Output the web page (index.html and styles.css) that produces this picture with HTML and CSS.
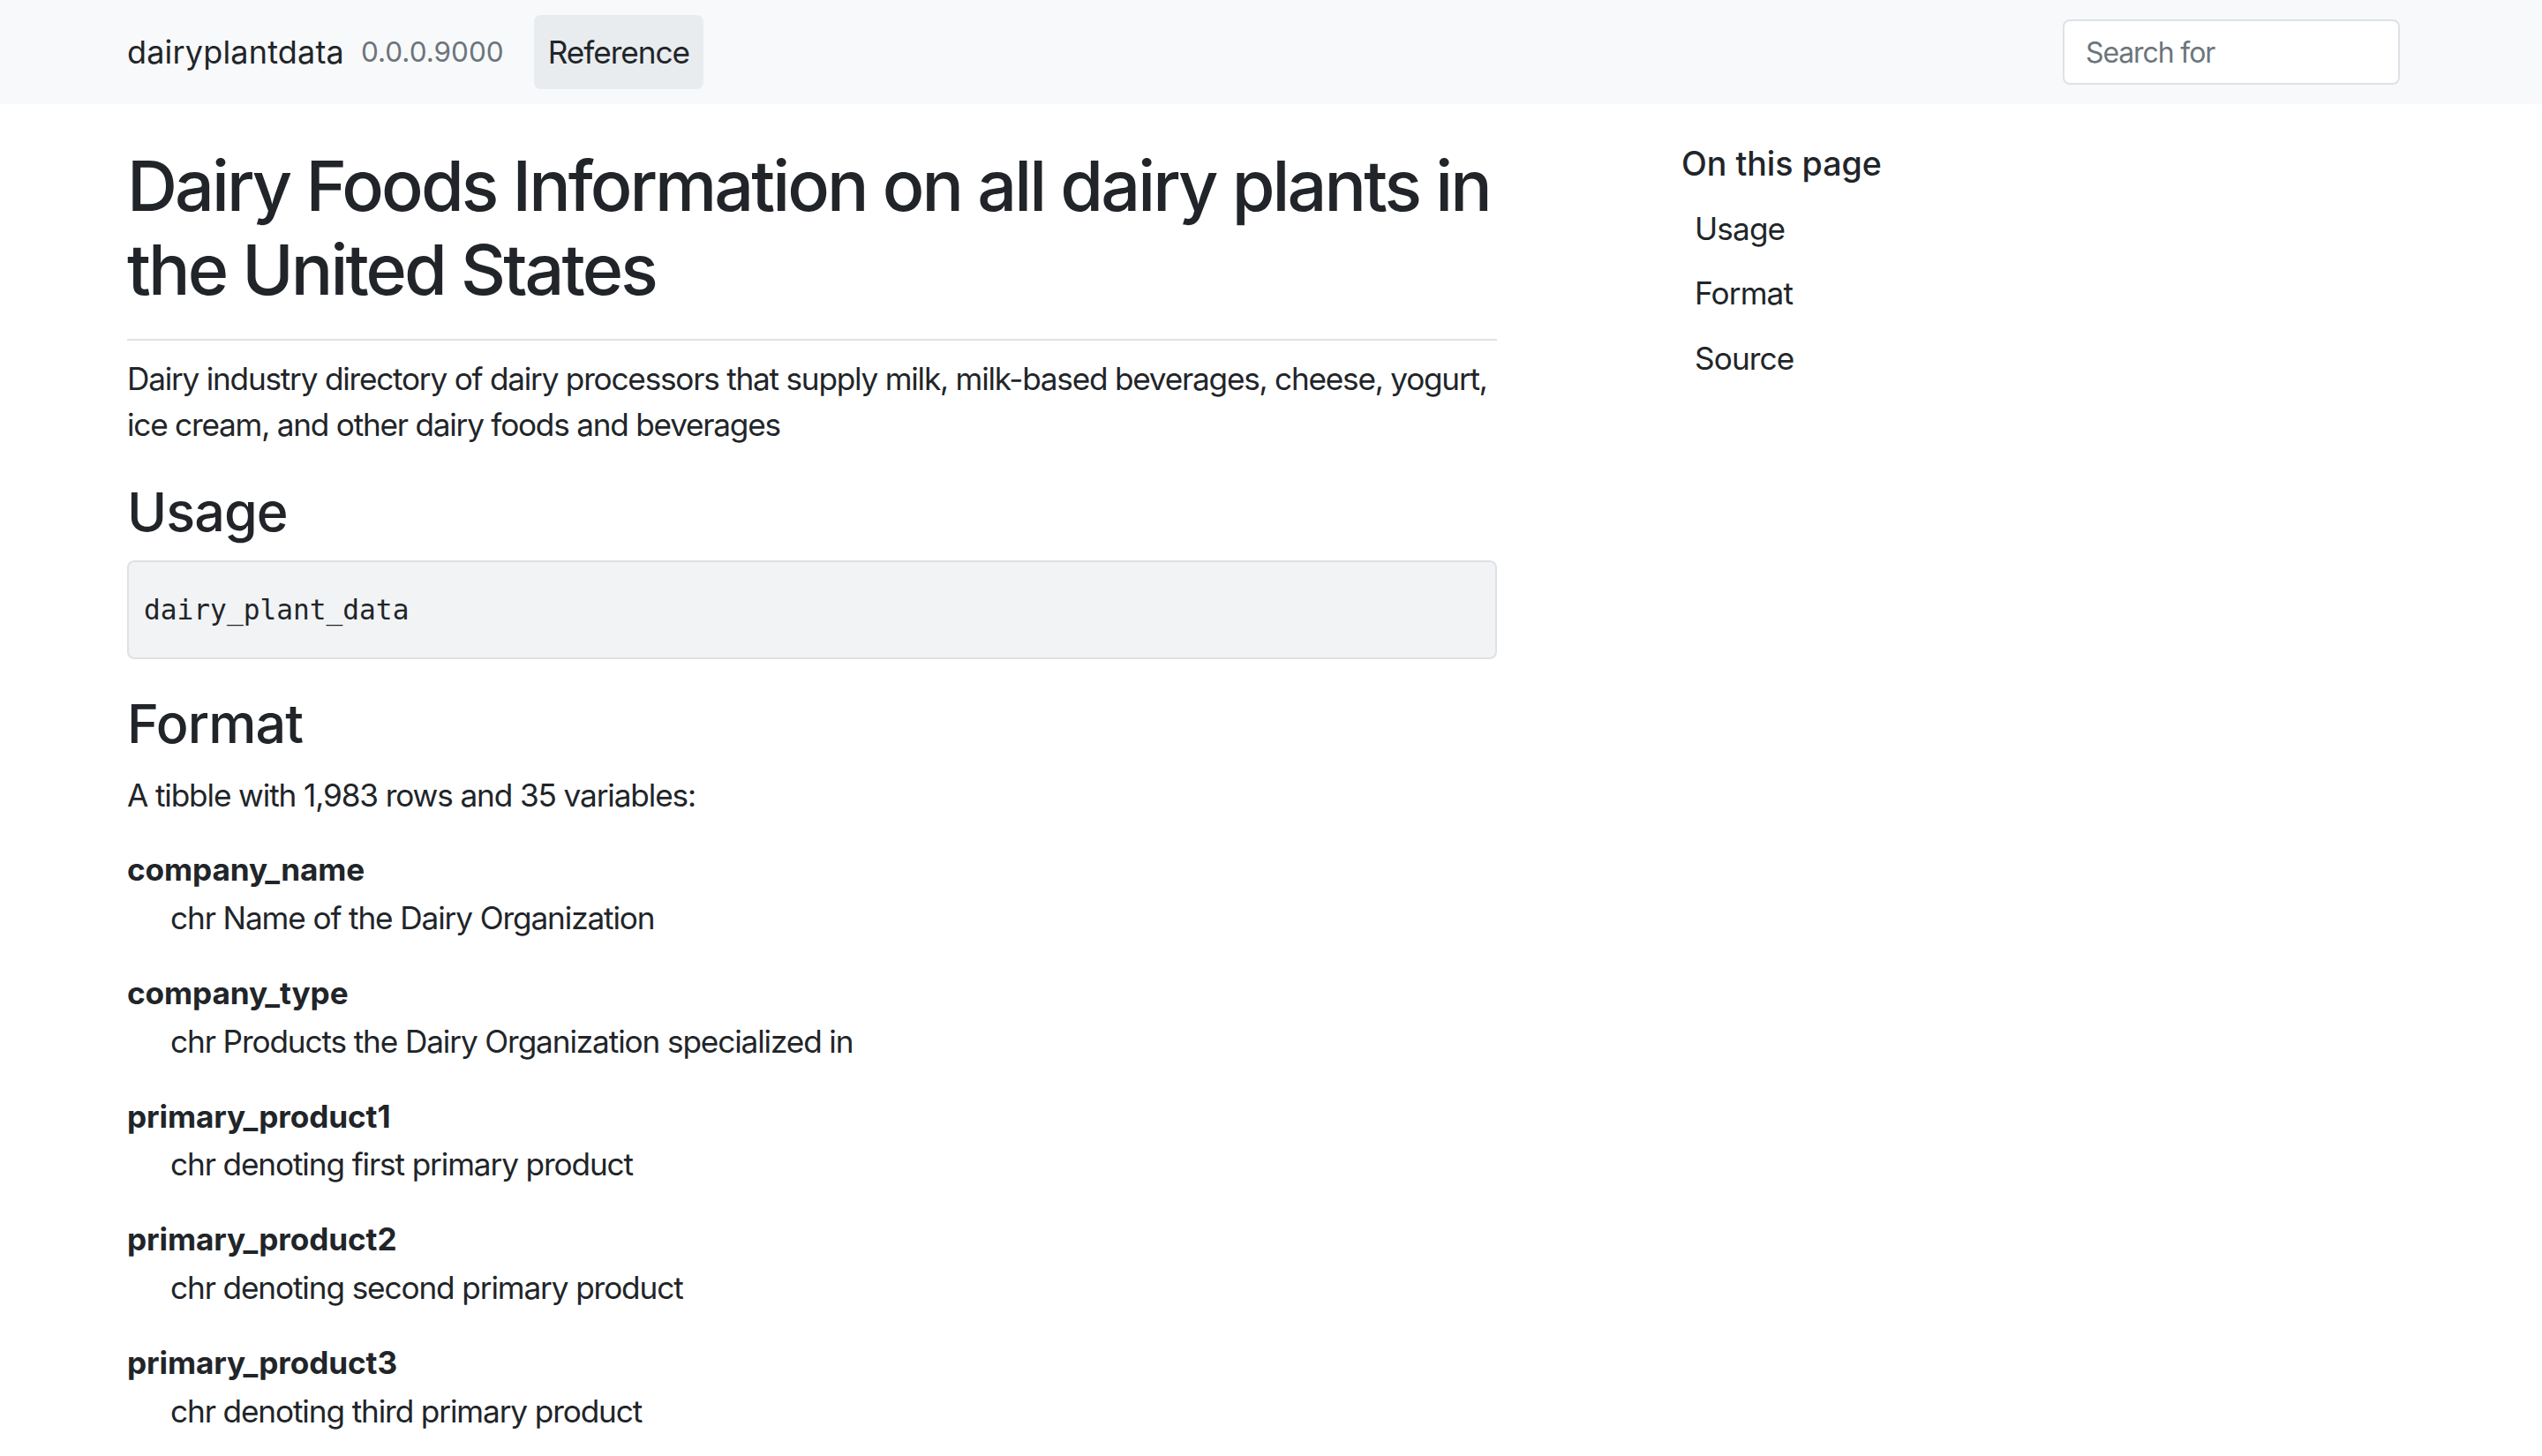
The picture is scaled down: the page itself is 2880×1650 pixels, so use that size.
FILE: index.html
```html
<!DOCTYPE html>
<html lang="en">
<head>
<meta charset="utf-8">
<title>Dairy Foods Information on all dairy plants in the United States — dairy_plant_data</title>
<link rel="stylesheet" href="styles.css">
</head>
<body>
<header class="navbar">
  <div class="nav-inner">
    <a class="brand" href="#">dairyplantdata</a>
    <span class="version">0.0.0.9000</span>
    <a class="nav-ref" href="#">Reference</a>
    <div class="spacer"></div>
    <input class="search" type="search" placeholder="Search for">
  </div>
</header>
<div class="page">
  <main class="main">
    <h1 class="title">Dairy Foods Information on all dairy plants in the United States</h1>
    <p class="desc">Dairy industry directory of dairy processors that supply milk, milk-based beverages, cheese, yogurt, ice cream, and other dairy foods and beverages</p>
    <h2 class="sec sec-usage">Usage</h2>
    <pre class="usage"><code>dairy_plant_data</code></pre>
    <h2 class="sec sec-format">Format</h2>
    <p class="tibble">A tibble with 1,983 rows and 35 variables:</p>
    <dl class="vars">
      <dt>company_name</dt>
      <dd>chr Name of the Dairy Organization</dd>
      <dt>company_type</dt>
      <dd>chr Products the Dairy Organization specialized in</dd>
      <dt>primary_product1</dt>
      <dd>chr denoting first primary product</dd>
      <dt>primary_product2</dt>
      <dd>chr denoting second primary product</dd>
      <dt>primary_product3</dt>
      <dd>chr denoting third primary product</dd>
    </dl>
  </main>
  <aside class="toc">
    <h2 class="toc-title">On this page</h2>
    <nav class="toc-nav">
      <a class="toc-link" href="#">Usage</a>
      <a class="toc-link" href="#">Format</a>
      <a class="toc-link" href="#">Source</a>
    </nav>
  </aside>
</div>
</body>
</html>
```
FILE: styles.css
```css
html, body {
  margin: 0;
  padding: 0;
  background: #ffffff;
}
body {
  font-family: Inter, "Noto Sans", "Liberation Sans", sans-serif;
  font-size: 35.2px;
  line-height: 1.5;
  color: #212529;
  letter-spacing: -0.032em;
}
a {
  color: #212529;
  text-decoration: none;
}
.navbar {
  background: #f8f9fa;
  letter-spacing: 0;
}
.nav-inner {
  display: flex;
  align-items: center;
  height: 118px;
  padding: 0 161px 0 144px;
  box-sizing: border-box;
}
.brand {
  font-size: 36px;
  line-height: 1.5;
  color: #212529;
  letter-spacing: 0.005em;
}
.version {
  font-size: 31.5px;
  color: #6c757d;
  margin-left: 19px;
}
.nav-ref {
  margin-left: 34px;
  display: block;
  background: #e9ecef;
  border-radius: 8px;
  padding: 15px 16px;
  font-size: 35.2px;
  line-height: 54px;
  letter-spacing: -0.03em;
}
.spacer {
  flex: 1;
}
.search {
  width: 382px;
  height: 74px;
  box-sizing: border-box;
  border: 2px solid #dee2e6;
  border-radius: 8px;
  background: #ffffff;
  padding: 0 24px;
  font-family: Inter, "Noto Sans", "Liberation Sans", sans-serif;
  font-size: 32px;
  letter-spacing: -0.035em;
  color: #212529;
  outline: none;
}
.search::placeholder {
  color: #6c757d;
}
.page {
  display: grid;
  grid-template-columns: 1552px 1fr;
  column-gap: 209px;
  padding: 0 144px;
}
.main {
  padding-top: 45px;
}
.title {
  margin: 0;
  font-size: 79px;
  line-height: 1.2;
  font-weight: 500;
  letter-spacing: -0.037em;
  padding-bottom: 31px;
  border-bottom: 2px solid #dee2e6;
}
.desc {
  margin: 17px 0 0;
  letter-spacing: -0.035em;
}
.sec {
  margin: 0;
  font-size: 61px;
  line-height: 1.2;
  font-weight: 500;
  letter-spacing: -0.015em;
}
.sec-usage {
  margin-top: 36px;
}
.usage {
  margin: 18px 0 0;
  background: #f1f3f5;
  border: 2px solid #dee2e6;
  border-radius: 8px;
  padding: 31px 17px;
  font-family: "DejaVu Sans Mono", "Liberation Mono", monospace;
  font-size: 31.2px;
  line-height: 46px;
  letter-spacing: 0;
  color: #212529;
}
.sec-format {
  margin-top: 37px;
}
.tibble {
  margin: 17px 0 0;
}
.vars {
  margin: 32px 0 0;
}
.vars dt {
  font-weight: 700;
  letter-spacing: -0.003em;
}
.vars dd {
  margin: 2px 0 32px 49px;
}
.toc {
  padding-top: 45px;
}
.toc-title {
  margin: 0 0 14px;
  font-size: 37.6px;
  line-height: 1.2;
  font-weight: 500;
  letter-spacing: 0;
}
.toc-nav {
  display: flex;
  flex-direction: column;
  align-items: flex-start;
}
.toc-link {
  display: block;
  padding: 10.5px 15px;
  font-size: 35.2px;
  line-height: 1.5;
  letter-spacing: -0.025em;
}
```
